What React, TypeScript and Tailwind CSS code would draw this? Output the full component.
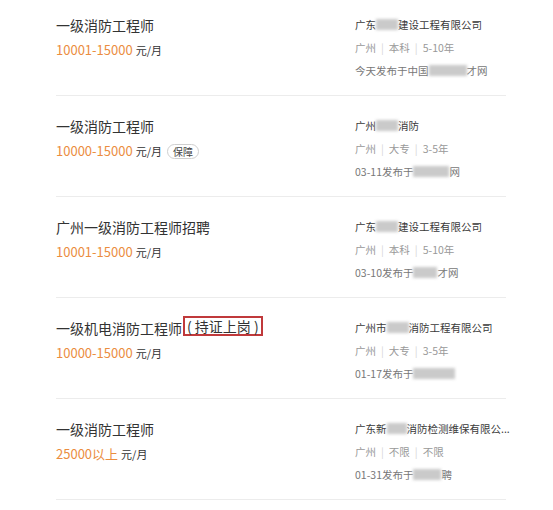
import React from "react";

const Blur = ({ w }: { w: number }) => (
  <span
    className="inline-block h-[11px] bg-[#cacaca] blur-[1.5px] align-[-1px]"
    style={{ width: w }}
  />
);

const Sep = () => <span className="mx-[5px] text-[#d6d6d6]">|</span>;

type Row = {
  title: React.ReactNode;
  salary: string;
  tag?: string;
  company: React.ReactNode;
  loc: [string, string, string];
  date: React.ReactNode;
};

const rows: Row[] = [
  {
    title: "一级消防工程师",
    salary: "10001-15000",
    company: (
      <>
        广东<Blur w={22} />建设工程有限公司
      </>
    ),
    loc: ["广州", "本科", "5-10年"],
    date: (
      <>
        今天发布于中国<Blur w={38} />才网
      </>
    ),
  },
  {
    title: "一级消防工程师",
    salary: "10000-15000",
    tag: "保障",
    company: (
      <>
        广州<Blur w={22} />消防
      </>
    ),
    loc: ["广州", "大专", "3-5年"],
    date: (
      <>
        03-11发布于<Blur w={36} />网
      </>
    ),
  },
  {
    title: "广州一级消防工程师招聘",
    salary: "10001-15000",
    company: (
      <>
        广东<Blur w={22} />建设工程有限公司
      </>
    ),
    loc: ["广州", "本科", "5-10年"],
    date: (
      <>
        03-10发布于<Blur w={24} />才网
      </>
    ),
  },
  {
    title: (
      <>
        一级机电消防工程师
        <span className="ml-[1px] inline-block border-2 border-[#c0393b] px-[2px] align-top leading-[16px]">
          ( 持证上岗 )
        </span>
      </>
    ),
    salary: "10000-15000",
    company: (
      <>
        广州市<Blur w={22} />消防工程有限公司
      </>
    ),
    loc: ["广州", "大专", "3-5年"],
    date: (
      <>
        01-17发布于<Blur w={42} />
      </>
    ),
  },
  {
    title: "一级消防工程师",
    salary: "25000以上",
    company: (
      <>
        广东新<Blur w={20} />消防检测维保有限公...
      </>
    ),
    loc: ["广州", "不限", "不限"],
    date: (
      <>
        01-31发布于<Blur w={28} />聘
      </>
    ),
  },
];

export default function App() {
  return (
    <div
      className="h-[510px] w-[553px] overflow-hidden bg-white"
      style={{ fontFamily: '"Noto Sans CJK SC", "Noto Sans", sans-serif' }}
    >
      <div className="ml-[56px] mr-[47px] -mt-[5px]">
        {rows.map((r, i) => (
          <div key={i} className="flex h-[101px] border-b border-[#ececec]">
            <div className="flex-1 pt-[18px]">
              <div className="h-[24px] text-[14px] leading-[24px] text-[#333]">
                {r.title}
              </div>
              <div className="mt-[2px] flex items-center text-[13px] leading-[22px]">
                <span className="text-[#eb8d3f]">{r.salary}</span>
                <span className="ml-[3px] text-[11px] text-[#333]">元/月</span>
                {r.tag && (
                  <span className="ml-[5px] rounded-full border border-[#cfcfcf] px-[5px] text-[10px] leading-[13px] text-[#444]">
                    {r.tag}
                  </span>
                )}
              </div>
            </div>
            <div className="w-[151px] pt-[20px] text-[10.5px]">
              <div className="h-[20px] leading-[20px] text-[#3a3a3a] whitespace-nowrap">
                {r.company}
              </div>
              <div className="mt-[3px] h-[20px] leading-[20px] text-[#999]">
                {r.loc[0]}
                <Sep />
                {r.loc[1]}
                <Sep />
                {r.loc[2]}
              </div>
              <div className="mt-[3px] h-[20px] leading-[20px] text-[#777] whitespace-nowrap">
                {r.date}
              </div>
            </div>
          </div>
        ))}
      </div>
    </div>
  );
}
